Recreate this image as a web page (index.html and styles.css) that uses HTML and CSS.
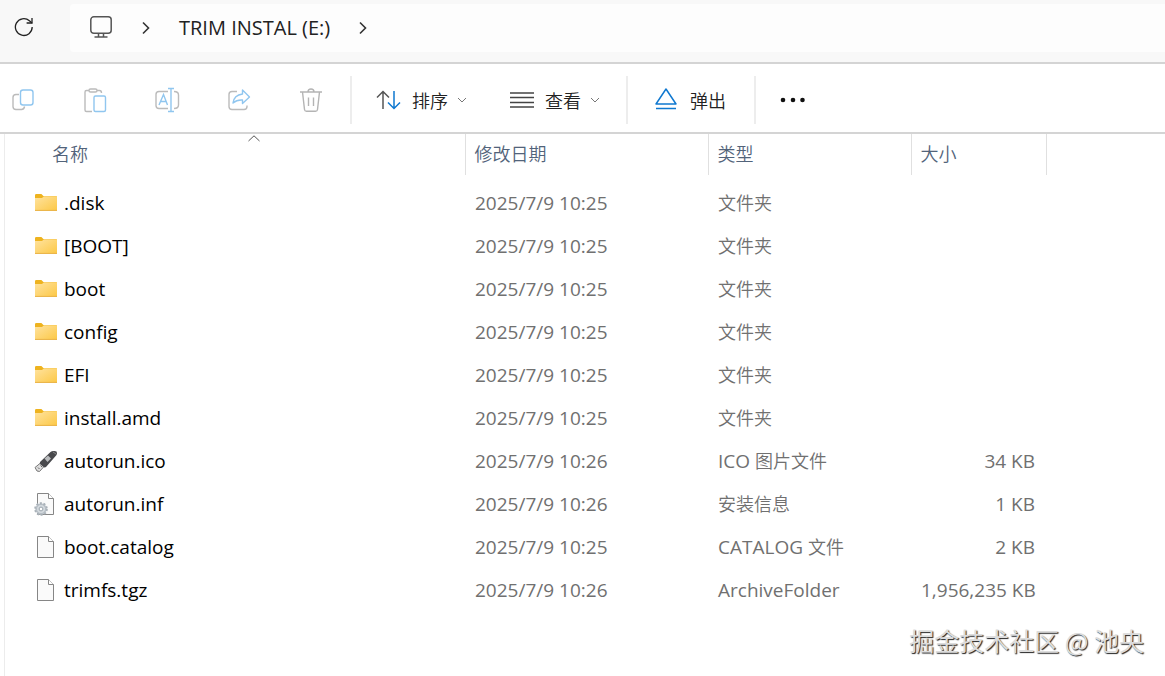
FILE: index.html
```html
<!DOCTYPE html>
<html lang="zh-CN">
<head>
<meta charset="utf-8">
<meta name="viewport" content="width=device-width, initial-scale=1">
<title>TRIM INSTAL (E:)</title>
<link rel="stylesheet" href="styles.css">
</head>
<body>
<svg class="defs" aria-hidden="true">
  <defs>
    <linearGradient id="folder-face" x1="0" y1="0" x2="1" y2="1">
      <stop offset="0" stop-color="#ffe3a0"/>
      <stop offset="1" stop-color="#fcc846"/>
    </linearGradient>
    <symbol id="folder" viewBox="0 0 24 24">
      <path d="M1 6V4.2Q1 3 2.2 3H7.4L9.4 5H22q1 0 1 1v3H1z" fill="#eeb31f"/>
      <path d="M1 7H8l2-1.8H23V19.5H1z" fill="url(#folder-face)"/>
      <path d="M1 19.4H23" stroke="#e9b040"/>
    </symbol>
    <symbol id="page" viewBox="0 0 24 24">
      <path d="M3.5 1.5H14.5L19.5 6.5V22.5H3.5z" fill="#fafafa" stroke="#868686"/>
      <path d="M14.5 1.5V6.5H19.5" fill="#fff" stroke="#868686"/>
    </symbol>
    <symbol id="chevron-down" viewBox="0 0 10 6">
      <path d="M1 1L5 5L9 1" fill="none" stroke="#777"/>
    </symbol>
    <symbol id="chevron-right" viewBox="0 0 8 14">
      <path d="M1 1.5L6.5 7L1 12.5" fill="none" stroke="#333" stroke-width="1.6"/>
    </symbol>
  </defs>
</svg>

<header class="nav">
  <button class="refresh" type="button" aria-label="刷新">
    <svg width="20" height="20" viewBox="0 0 20 20" fill="none" stroke="#222" stroke-width="1.3"><path d="M18.2 10A8.4 8.4 0 1 1 15.4 3.8L18 6"/><path d="M18 1V6H12.6"/></svg>
  </button>
  <nav class="crumbs" aria-label="路径">
    <button type="button" aria-label="此电脑">
      <svg width="24" height="26" viewBox="0 0 24 26" fill="none" stroke="#555" stroke-width="1.5"><rect x="1.8" y="1.800" width="20.4" height="16.500" rx="3"/><path d="M9.5 18.500V22M14.5 18.500V22M5.500 22H18.500"/></svg>
    </button>
    <svg class="sep" width="8" height="14"><use href="#chevron-right"/></svg>
    <button type="button">TRIM INSTAL (E:)</button>
    <svg class="sep" width="8" height="14"><use href="#chevron-right"/></svg>
  </nav>
</header>

<div class="toolbar" role="toolbar" aria-label="命令">
  <div class="icons">
    <button type="button" disabled aria-label="复制">
      <svg width="24" height="24" viewBox="0 0 24 24" fill="none" stroke-width="1.4"><path d="M8 6.5H5Q2 6.5 2 9.500V18.500Q2 21.500 5 21.500H10.500Q13 21.500 13.600 18.500" stroke="#bbb"/><rect x="9.500" y="2" width="12.500" height="15" rx="2.500" stroke="#90c6ef"/></svg>
    </button>
    <button type="button" disabled aria-label="粘贴">
      <svg width="24" height="26" viewBox="0 0 24 26" fill="none" stroke-width="1.400"><path d="M6 3.500H3.500Q2 3.500 2 5V23Q2 24.500 3.500 24.500H9M14 3.500H16.500Q18.500 3.500 18.500 6" stroke="#bbb"/><rect x="6" y="2" width="8" height="3" rx="1.500" stroke="#bbb"/><rect x="11" y="9" width="11.500" height="15.500" rx="1.500" stroke="#90c6ef"/></svg>
    </button>
    <button type="button" disabled aria-label="重命名">
      <svg width="26" height="26" viewBox="0 0 26 26" fill="none" stroke-width="1.400"><path d="M14 4.500H5Q2 4.500 2 7.500V18.500Q2 21.500 5 21.500H14M20 4.500Q24.500 4.500 24.500 8V18Q24.500 21.500 20 21.500" stroke="#bbb"/><path d="M5 18L9.500 7.500L13.500 18M6.500 14.500H12.500M17 2V24M14 1.500H20M14 24.500H20" stroke="#90c6ef"/></svg>
    </button>
    <button type="button" disabled aria-label="共享">
      <svg width="24" height="24" viewBox="0 0 24 24" fill="none" stroke-width="1.400" stroke-linejoin="round"><path d="M10 3.500H5Q2 3.500 2 6.500V18.500Q2 21.500 5 21.500H17Q20 21.500 20 18.500V17.500" stroke="#bbb"/><path d="M15.500 2L22.500 9L15.500 15.500V12Q10 11.500 6 15Q7 7 15.500 6z" stroke="#90c6ef"/></svg>
    </button>
    <button type="button" disabled aria-label="删除">
      <svg width="24" height="26" viewBox="0 0 24 26" fill="none" stroke="#b4b4b4" stroke-width="1.400"><path d="M1 5H23M9 5Q9 2 12 2Q15 2 15 5M3.500 5L5.500 22.500Q5.700 24.300 7.500 24.300H16.500Q18.300 24.300 18.500 22.500L20.500 5M9.500 10.500V19M14.500 10.500V19"/></svg>
    </button>
  </div>
  <div class="group">
    <button class="cmd" type="button">
      <svg width="25" height="20" viewBox="0 0 25 20" fill="none" stroke-width="1.500"><path d="M7 19V2M1 7.500L7 1.500L13 7.500" stroke="#555"/><path d="M18 1V18M12 12.500L18 18.500L24 12.500" stroke="#0f78d0"/></svg>
      <span>排序</span>
      <svg class="drop" width="10" height="6"><use href="#chevron-down"/></svg>
    </button>
    <button class="cmd" type="button">
      <svg width="24" height="20" viewBox="0 0 24 20" stroke="#444" stroke-width="1.400"><path d="M0 3H24M0 7.500H24M0 12.500H24M0 17H24"/></svg>
      <span>查看</span>
      <svg class="drop" width="10" height="6"><use href="#chevron-down"/></svg>
    </button>
  </div>
  <div class="group eject">
    <button class="cmd" type="button">
      <svg width="22" height="26" viewBox="0 0 22 26" fill="none" stroke="#0f78d0" stroke-width="1.500" stroke-linejoin="round"><path d="M11 2L21 17H1zM1 21.500H21"/></svg>
      <span>弹出</span>
    </button>
  </div>
  <div class="group more">
    <button class="cmd" type="button" aria-label="更多">
      <svg width="26" height="6" viewBox="0 0 26 6" fill="#111"><circle cx="3" cy="3" r="2.300"/><circle cx="13" cy="3" r="2.300"/><circle cx="22.500" cy="3" r="2.300"/></svg>
    </button>
  </div>
</div>

<main class="files">
  <table>
    <colgroup><col class="c-name"><col class="c-date"><col class="c-type"><col class="c-size"><col></colgroup>
    <thead>
      <tr>
        <th class="name" aria-sort="ascending"><button type="button">名称<svg class="sorted" width="12" height="7" viewBox="0 0 12 7" fill="none" stroke="#555"><path d="M.5 6L6 .8L11.500 6"/></svg></button></th>
        <th><button type="button">修改日期</button></th>
        <th><button type="button">类型</button></th>
        <th><button type="button">大小</button></th>
        <td></td>
      </tr>
    </thead>
    <tbody>
      <tr><td><span class="file"><svg><use href="#folder"/></svg>.disk</span></td><td>2025/7/9 10:25</td><td><span class="zh">文件夹</span></td><td></td><td></td></tr>
      <tr><td><span class="file"><svg><use href="#folder"/></svg>[BOOT]</span></td><td>2025/7/9 10:25</td><td><span class="zh">文件夹</span></td><td></td><td></td></tr>
      <tr><td><span class="file"><svg><use href="#folder"/></svg>boot</span></td><td>2025/7/9 10:25</td><td><span class="zh">文件夹</span></td><td></td><td></td></tr>
      <tr><td><span class="file"><svg><use href="#folder"/></svg>config</span></td><td>2025/7/9 10:25</td><td><span class="zh">文件夹</span></td><td></td><td></td></tr>
      <tr><td><span class="file"><svg><use href="#folder"/></svg>EFI</span></td><td>2025/7/9 10:25</td><td><span class="zh">文件夹</span></td><td></td><td></td></tr>
      <tr><td><span class="file"><svg><use href="#folder"/></svg>install.amd</span></td><td>2025/7/9 10:25</td><td><span class="zh">文件夹</span></td><td></td><td></td></tr>
      <tr><td><span class="file"><svg viewBox="0 0 24 24"><path d="M1 18.500L6.500 14L10 17.500L5.500 22.500L3 22z" fill="#ddd" stroke="#777"/><path d="M4 18.500L5.500 20M6.500 16.500L8 18" stroke="#666"/><path d="M6 13L16.500 3Q18 1.600 20.500 2L22.500 2.500Q23.600 4 22.500 6L12 18Q10.500 19 9 17.500L6.500 15.500Q5.500 14.300 6 13z" fill="#48494c"/><path d="M10.500 9.500L14 6.500L17 9.500L13.500 13z" fill="#b9bbbd"/><path d="M19 3L22 5" stroke="#888"/></svg>autorun.ico</span></td><td>2025/7/9 10:26</td><td>ICO <span class="zh">图片文件</span></td><td>34 KB</td><td></td></tr>
      <tr><td><span class="file"><svg viewBox="0 0 24 24"><use href="#page" width="24" height="24"/><circle cx="7" cy="17" r="5.800" fill="#c3c9cf" stroke="#a9b1b8" stroke-width="2" stroke-dasharray="2 1.640"/><circle cx="7" cy="17" r="4.600" fill="#d3d9de" stroke="#b4bcc3"/><circle cx="7" cy="17" r="1.900" fill="#fff" stroke="#9aa4ac"/></svg>autorun.inf</span></td><td>2025/7/9 10:26</td><td><span class="zh">安装信息</span></td><td>1 KB</td><td></td></tr>
      <tr><td><span class="file"><svg><use href="#page"/></svg>boot.catalog</span></td><td>2025/7/9 10:25</td><td>CATALOG <span class="zh">文件</span></td><td>2 KB</td><td></td></tr>
      <tr><td><span class="file"><svg><use href="#page"/></svg>trimfs.tgz</span></td><td>2025/7/9 10:26</td><td>ArchiveFolder</td><td>1,956,235 KB</td><td></td></tr>
    </tbody>
  </table>
</main>
<p class="watermark">掘金技术社区 @ 池央</p>
</body>
</html>
```
FILE: styles.css
```css
* { box-sizing: border-box; }

body {
  margin: 0;
  min-height: 100vh;
  position: relative;
  display: flex;
  flex-direction: column;
  background: #fff;
  color: #000;
  font: 19px/24px "Open Sans", "Noto Sans CJK SC", sans-serif;
}

.defs { position: absolute; width: 0; height: 0; }

svg { display: block; flex: none; }

button {
  display: flex;
  align-items: center;
  margin: 0;
  padding: 0;
  border: 0;
  background: none;
  color: inherit;
  font: inherit;
}

.nav {
  display: flex;
  padding: 4px 0 10px 14px;
  border-bottom: 2px solid #d4d4d4;
  background: #f8f8f8;
}

.refresh { width: 56px; padding-bottom: 2px; }

.crumbs {
  flex: 1;
  display: flex;
  align-items: center;
  min-height: 48px;
  padding-left: 19px;
  border-radius: 4px 0 0 4px;
  background: #fdfdfd;
  color: #222;
  font-size: 20px;
}

.crumbs .sep { margin: 0 29px; }

.toolbar {
  display: flex;
  align-items: center;
  min-height: 70px;
  padding-top: 4px;
  border-bottom: 2px solid #d4d4d4;
  color: #222;
  font: 18px/24px "Noto Sans CJK SC", sans-serif;
  font-weight: 350;
}

.icons { display: flex; gap: 26px; padding-right: 16px; }
.icons button { width: 46px; justify-content: center; }

.group {
  display: flex;
  align-items: center;
  gap: 43px;
  min-height: 48px;
  padding: 0 26px 0 24px;
  border-left: 2px solid #ededed;
}

.cmd { gap: 11px; }
.cmd .drop { margin-left: -2px; }
.eject { padding: 0 28px 0 27px; }
.eject .cmd { gap: 13px; }

.files { flex: 1; margin-left: 4px; border-left: 1px solid #ececec; }

table {
  width: 100%;
  border-collapse: collapse;
  table-layout: fixed;
}

.c-name { width: 460px; }
.c-date { width: 243px; }
.c-type { width: 203px; }
.c-size { width: 135px; }

th {
  height: 41px;
  padding: 0;
  border-right: 1px solid #e0e0e0;
  color: #52637a;
  font: 18px/24px "Noto Sans CJK SC", sans-serif;
  font-weight: 350;
}

th button { position: relative; width: 100%; height: 41px; padding: 0 0 3px 9px; }
th.name { padding-left: 38px; }
.sorted { position: absolute; top: 1px; left: calc(50% - 6px); }

tbody td { height: 43px; padding: 0 11px 0 10px; color: #707070; white-space: nowrap; }
tbody tr:first-child td { height: 49px; padding-top: 6px; }
tbody td:nth-child(4) { text-align: right; }
tbody td:first-child { padding-left: 29px; color: #000; }

.file { display: flex; align-items: center; gap: 6px; }
.file svg { width: 24px; height: 24px; }

.zh { font: 18px/24px "Noto Sans CJK SC", sans-serif; font-weight: 350; }

.watermark {
  position: absolute;
  right: 21px;
  bottom: 20px;
  margin: 0;
  color: #dcdcdc;
  font: 25px/32px "Noto Sans CJK SC", sans-serif;
  text-shadow: 1px 1px 1px #222;
}
```
